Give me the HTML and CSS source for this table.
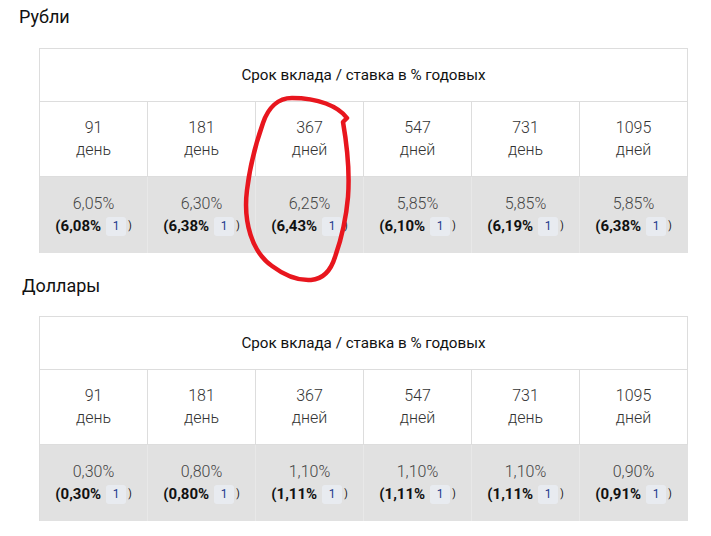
FILE: index.html
```html
<!DOCTYPE html>
<html lang="ru">
<head>
<meta charset="utf-8">
<title>Ставки</title>
<link rel="stylesheet" href="styles.css">
</head>
<body>
<div class="page">
  <h2 class="title title--rub">Рубли</h2>
  <div class="rates">
    <div class="cell head">Срок вклада / ставка в % годовых</div>
    <div class="cell term"><span>91</span><span>день</span></div>
    <div class="cell term"><span>181</span><span>день</span></div>
    <div class="cell term"><span>367</span><span>дней</span></div>
    <div class="cell term"><span>547</span><span>дней</span></div>
    <div class="cell term"><span>731</span><span>день</span></div>
    <div class="cell term"><span>1095</span><span>дней</span></div>
    <div class="cell rate"><span class="base">6,05%</span><span class="eff">(6,08%<span class="note">1</span><span class="close">)</span></span></div>
    <div class="cell rate"><span class="base">6,30%</span><span class="eff">(6,38%<span class="note">1</span><span class="close">)</span></span></div>
    <div class="cell rate"><span class="base">6,25%</span><span class="eff">(6,43%<span class="note">1</span><span class="close">)</span></span></div>
    <div class="cell rate"><span class="base">5,85%</span><span class="eff">(6,10%<span class="note">1</span><span class="close">)</span></span></div>
    <div class="cell rate"><span class="base">5,85%</span><span class="eff">(6,19%<span class="note">1</span><span class="close">)</span></span></div>
    <div class="cell rate"><span class="base">5,85%</span><span class="eff">(6,38%<span class="note">1</span><span class="close">)</span></span></div>
  </div>

  <h2 class="title title--usd">Доллары</h2>
  <div class="rates">
    <div class="cell head">Срок вклада / ставка в % годовых</div>
    <div class="cell term"><span>91</span><span>день</span></div>
    <div class="cell term"><span>181</span><span>день</span></div>
    <div class="cell term"><span>367</span><span>дней</span></div>
    <div class="cell term"><span>547</span><span>дней</span></div>
    <div class="cell term"><span>731</span><span>день</span></div>
    <div class="cell term"><span>1095</span><span>дней</span></div>
    <div class="cell rate"><span class="base">0,30%</span><span class="eff">(0,30%<span class="note">1</span><span class="close">)</span></span></div>
    <div class="cell rate"><span class="base">0,80%</span><span class="eff">(0,80%<span class="note">1</span><span class="close">)</span></span></div>
    <div class="cell rate"><span class="base">1,10%</span><span class="eff">(1,11%<span class="note">1</span><span class="close">)</span></span></div>
    <div class="cell rate"><span class="base">1,10%</span><span class="eff">(1,11%<span class="note">1</span><span class="close">)</span></span></div>
    <div class="cell rate"><span class="base">1,10%</span><span class="eff">(1,11%<span class="note">1</span><span class="close">)</span></span></div>
    <div class="cell rate"><span class="base">0,90%</span><span class="eff">(0,91%<span class="note">1</span><span class="close">)</span></span></div>
  </div>
</div>
<svg class="scribble" width="711" height="536" viewBox="0 0 711 536" aria-hidden="true">
  <path d="M 347 118 C 338 106, 318 98, 292 98 C 278 98, 268 108, 263 123 C 257 140, 250 165, 247 190 C 243 222, 252 252, 272 266 C 284 275, 296 281, 311 280 C 323 279, 331 270, 335 257 C 341 240, 346 220, 348 197 C 350 170, 347 145, 343 122 L 347 118" />
</svg>
</body>
</html>
```

FILE: styles.css
```css
html, body {
  margin: 0;
  padding: 0;
  background: #ffffff;
}

body {
  font-family: Roboto, "Liberation Sans", Arial, sans-serif;
  color: #111111;
  position: relative;
  width: 711px;
  height: 536px;
  overflow: hidden;
}

.page {
  padding-top: 5px;
}

.title {
  margin: 0;
  font-size: 18px;
  line-height: 24px;
  font-weight: 400;
  color: #111111;
}

.title--rub {
  padding-left: 19px;
  margin-bottom: 19px;
}

.title--usd {
  padding-left: 22px;
  margin-top: 21px;
  margin-bottom: 18px;
}

.rates {
  margin-left: 39px;
  width: 649px;
  box-sizing: border-box;
  display: grid;
  grid-template-columns: repeat(6, 108px);
  border-top: 1px solid #dddddd;
  border-left: 1px solid #dddddd;
}

.cell {
  box-sizing: border-box;
  border-right: 1px solid #dddddd;
  border-bottom: 1px solid #dddddd;
  display: flex;
  flex-direction: column;
  align-items: center;
  justify-content: center;
  text-align: center;
}

.head {
  grid-column: 1 / -1;
  height: 53px;
  font-size: 15.2px;
  color: #111111;
}

.term {
  height: 75px;
  font-size: 16px;
  line-height: 22px;
  font-weight: 300;
  color: #333333;
}

.rate {
  height: 76px;
  background: #e1e1e1;
  border-right-color: #e8e8e8;
  border-bottom: none;
  font-size: 16px;
  line-height: 22px;
}

.rate:last-child {
  border-right-color: #e1e1e1;
}

.base {
  font-weight: 300;
  color: #444444;
}

.eff {
  display: flex;
  align-items: center;
  font-weight: 700;
  font-size: 15px;
  color: #111111;
}

.note {
  display: inline-flex;
  align-items: center;
  justify-content: center;
  width: 20px;
  height: 19px;
  margin-left: 5px;
  border-radius: 3px;
  background: #e8ebf0;
  color: #1c3a8c;
  font-size: 12px;
  font-weight: 400;
}

.close {
  margin-left: 2px;
  font-size: 10px;
  font-weight: 400;
}

.scribble {
  position: absolute;
  left: 0;
  top: 0;
  pointer-events: none;
}

.scribble path {
  fill: none;
  stroke: #e8161e;
  stroke-width: 4.5;
  stroke-linecap: round;
  stroke-linejoin: round;
}
```
